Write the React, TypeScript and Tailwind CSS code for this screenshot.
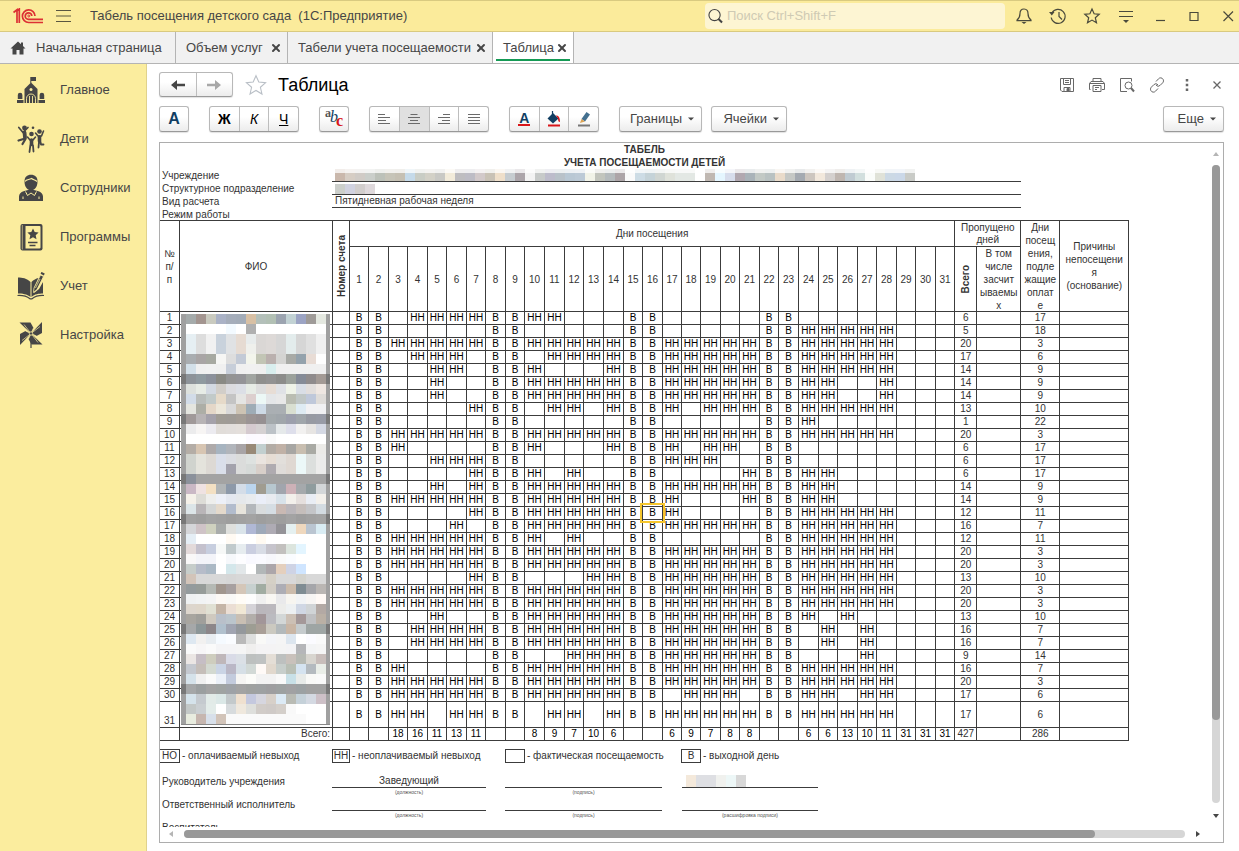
import React from 'react';
import { X } from 'lucide-react';

type IconProps = { children: React.ReactNode; box?: string; className?: string };

const Icon = ({ children, box = '0 0 28 28', className = 'size-7' }: IconProps) => (
  <svg viewBox={box} className={className} fill="none" aria-hidden="true">
    {children}
  </svg>
);

/* ---------- sidebar icons ---------- */

const SchoolIcon = () => (
  <Icon className="size-7 text-[#464646]">
    <g fill="currentColor">
      <path d="M13.300 1h5.700v4h-4.700v2h-1z" />
      <path d="M14 6.500 7.500 13v14h13V13z" />
      <path d="M0 24h6.500v3H0zM21.500 24H28v3h-6.500z" />
      <path d="M.8 23v-4a2.300 2.300 0 0 1 4.600 0v4zM22.600 23v-4a2.300 2.300 0 0 1 4.600 0v4z" />
    </g>
    <circle cx="14" cy="13.500" r="1.500" fill="#fbed9e" />
    <path d="M9.500 27v-4.500a4.500 4.500 0 0 1 9 0V27M12.500 27v-7M15.500 27v-7" stroke="#fbed9e" strokeWidth=".9" />
  </Icon>
);

const ChildrenIcon = () => (
  <Icon className="size-7 text-[#464646]">
    <g fill="currentColor">
      <circle cx="7.500" cy="3" r="2.400" />
      <circle cx="14.500" cy="9" r="2.300" />
      <circle cx="22.500" cy="6.500" r="2.300" />
      <circle cx="16" cy="2.800" r="1.300" />
    </g>
    <g stroke="currentColor" strokeLinecap="round" strokeLinejoin="round">
      <path d="M1.800 2.500 6 7.500 11 2.500" strokeWidth="1.700" />
      <path d="M7.500 7.500 8 12.500" strokeWidth="3.800" />
      <path d="m6.500 14-5 1.500M8.500 14l-3 5" strokeWidth="2.200" />
      <path d="m10.500 12 2.500 3h3l2.500-3" strokeWidth="1.600" />
      <path d="M14.500 15v4.500" strokeWidth="3.600" />
      <path d="M13.300 20.500 12.500 27M16 20.500l.5 6" strokeWidth="1.800" />
      <path d="m18.500 8 2.500 3h3.500l2-5" strokeWidth="1.600" />
      <path d="M22.500 12v4" strokeWidth="3.600" />
      <path d="m22 17-.5 5.500M23.500 17l.5 2.500h2.500" strokeWidth="1.800" />
    </g>
  </Icon>
);

const StaffIcon = () => (
  <Icon className="size-7 text-[#464646]">
    <path d="M2 27v-4.500c0-2.500 2-4.500 4.500-5.200L11 16h6l4.500 1.300c2.500.7 4.500 2.700 4.500 5.200V27z" fill="currentColor" />
    <path d="m8.500 17.500 2 4 3.500-2.500 3.500 2.500 2-4" stroke="#fbed9e" strokeWidth="1" />
    <path d="M7.500 7.500C7.500 3 10 .8 14 .8s6.500 2.200 6.500 6.700c0 5.500-3 9-6.500 9s-6.500-3.500-6.500-9z" fill="currentColor" />
    <path d="M8 7.500C9.500 5 12 6 14.500 4.500c2 1.500 3.500 1 5.500 3" stroke="#fbed9e" strokeWidth="1.200" />
    <path d="M6 22.500V25M22 22.500V25" stroke="#fbed9e" strokeWidth="1" />
  </Icon>
);

const ProgramsIcon = () => (
  <Icon className="size-7 text-[#464646]">
    <rect x="3.500" y="1" width="22" height="26.500" rx="2" fill="currentColor" />
    <path d="M8.500 3h14a1 1 0 0 1 1 1v20.500a1 1 0 0 1-1 1h-14z" fill="#fbed9e" />
    <path d="M5.300 2v24.500" stroke="#fbed9e" strokeWidth=".6" />
    <path d="m16 5.500 1.700 3.600 3.900.5-2.900 2.700.8 3.900-3.500-1.900-3.500 1.900.8-3.900-2.900-2.700 3.900-.5z" fill="currentColor" />
    <path d="M11 19.500h9.500M12.500 22.500h6" stroke="currentColor" strokeWidth="1.400" />
  </Icon>
);

const AccountingIcon = () => (
  <Icon className="size-7 text-[#464646]">
    <path d="M1 5.500c4 0 9 .8 12.500 4.500V25C10 22 5 21.500 1 21.500zM14.500 10c2-2 4.500-3.500 7-4l-4 9-.5 6 5-4 4-7v11.500c-4 0-8.500.5-11.500 3.500z" fill="currentColor" />
    <path d="M.5 23.500c5-.3 9 .5 12.500 3.300h2c3.500-2.800 7-3.600 12-3.300" stroke="currentColor" strokeWidth="1.200" />
    <path d="m23.500 3 3 1.500-6.500 13-3.500 3 .5-4.500z" fill="currentColor" stroke="#fbed9e" strokeWidth=".8" />
    <path d="m24 .8 3.300 1.700" stroke="currentColor" strokeWidth="2" />
    <path d="m23 7-4.500 9" stroke="#fbed9e" strokeWidth=".7" />
  </Icon>
);

const PinwheelIcon = () => (
  <Icon className="size-7 text-[#464646]">
    <path d="M14 14v13" stroke="currentColor" strokeWidth="1.200" />
    {[0, 90, 180, 270].map((angle) => (
      <g key={angle} transform={`rotate(${angle} 14 12.500)`}>
        <path d="M14 12.500 2.500 1.500h11l3 5.500z" fill="currentColor" />
        <path d="M14 12.500 7 3.500M14 12.500l2.500-5.500" stroke="#fbed9e" strokeWidth=".7" />
      </g>
    ))}
    <circle cx="14" cy="12.500" r="1.700" fill="currentColor" stroke="#fbed9e" strokeWidth=".8" />
  </Icon>
);

const sections = [
  { label: 'Главное', icon: <SchoolIcon /> },
  { label: 'Дети', icon: <ChildrenIcon /> },
  { label: 'Сотрудники', icon: <StaffIcon /> },
  { label: 'Программы', icon: <ProgramsIcon /> },
  { label: 'Учет', icon: <AccountingIcon /> },
  { label: 'Настройка', icon: <PinwheelIcon /> },
];

/* ---------- title bar ---------- */

const Logo = () => (
  <svg viewBox="0 0 30 16" className="h-4 w-[30px]" fill="none" stroke="#dc3034" role="img" aria-label="1С">
    <path d="M.5 4.500 4 1.800V15M3 3.500 6.300 1v14" strokeWidth="1.700" />
    <path d="M22 8a6.300 6.300 0 1 0-6.300 6.500H30" strokeWidth="1.700" />
    <path d="M18.800 8a3.300 3.300 0 1 0-3.200 3.400H30" strokeWidth="1.700" />
    <circle cx="15.800" cy="8" r="1" strokeWidth="1" />
  </svg>
);

const STAR = 'm9 2 2.100 4.800 5.100.5-3.900 3.400 1.200 5.100L9 13.100l-4.500 2.700 1.200-5.100L1.800 7.300l5.100-.5z';

const windowButtons = [
  {
    label: 'Уведомления',
    icon: (
      <>
        <path d="M9 2c-3 0-4 2-4 4.500 0 4-1 5-3 6.500v.7h14V13c-2-1.500-3-2.500-3-6.500C13 4 12 2 9 2z" />
        <path d="M6.500 15h5L9 17z" fill="#4a4a3c" stroke="none" />
      </>
    ),
  },
  {
    label: 'История',
    icon: (
      <>
        <path d="M3 6a7 7 0 1 1-.8 4.500M10 5v4.500l3 3" />
        <path d="M0 5h5.500L2.800 8.500z" fill="#4a4a3c" stroke="none" />
      </>
    ),
  },
  { label: 'Избранное', icon: <path d={STAR} /> },
  {
    label: 'Настройки панели',
    icon: (
      <>
        <path d="M2 4.500h14M2 9.500h14" />
        <path d="M6 13h6l-3 3z" fill="#4a4a3c" stroke="none" />
      </>
    ),
  },
  { label: 'Свернуть', icon: <path d="M5 13.500h9" /> },
  { label: 'Развернуть', icon: <path d="M5 5.500h8v8H5z" /> },
  { label: 'Закрыть', icon: <path d="m4.500 4.500 9.500 9.500m0-9.500-9.500 9.500" /> },
];

const TitleBar = () => (
  <header className="flex h-8 shrink-0 items-center overflow-hidden border-t border-b border-[#d9ca80] bg-[#fbeb9b] pl-[13px] text-[#464646]">
    <Logo />
    <button aria-label="Главное меню" className="ml-[13px] flex">
      <Icon box="0 0 15 14" className="h-3.5 w-[15px]">
        <path d="M0 1.500h15M0 7h15M0 12.500h15" stroke="#5a5640" strokeWidth="1" />
      </Icon>
    </button>
    <h1 className="ml-[19px] text-[13px] whitespace-pre">Табель посещения детского сада  (1С:Предприятие)</h1>
    <label className="mr-0.5 ml-auto flex h-[26px] w-[300px] items-center rounded-sm bg-[#fdf5d3] pl-[3px]">
      <Icon box="0 0 16 16" className="size-4">
        <circle cx="7" cy="7" r="6" stroke="#444" strokeWidth="1.200" />
        <path d="m11 11 4 4" stroke="#444" strokeWidth="2.200" />
      </Icon>
      <input
        type="text"
        aria-label="Поиск"
        placeholder="Поиск Ctrl+Shift+F"
        className="ml-1 w-full bg-transparent text-[13px] outline-none placeholder:text-[#cfcab4]"
      />
    </label>
    <div className="-mr-1.5 flex">
      {windowButtons.map((b) => (
        <button key={b.label} aria-label={b.label} className="flex w-[34px] justify-center">
          <Icon box="0 0 18 18" className="size-[18px] stroke-[#4a4a3c] stroke-[1.200]">
            {b.icon}
          </Icon>
        </button>
      ))}
    </div>
  </header>
);

/* ---------- tabs ---------- */

const tabs = [
  { title: 'Объем услуг', width: 'w-28', active: false },
  { title: 'Табели учета посещаемости', width: 'w-[205px]', active: false },
  { title: 'Таблица', width: 'w-[81px]', active: true },
];

const TabBar = () => (
  <nav className="flex h-8 shrink-0 border-b border-[#b4b4b4] bg-[#f1f1f1] text-[13px] text-[#464646]">
    <a href="#home" className="flex w-44 items-center border-r border-[#b4b4b4] pl-2.5">
      <Icon box="0 0 16 14" className="h-3.5 w-4">
        <path d="M8 .5.500 7.500H2.500V13.500H6.500V9h3v4.500h4v-6h2L13 5V1.500h-2v1.700z" fill="#464646" />
      </Icon>
      <span className="ml-2.5">Начальная страница</span>
    </a>
    {tabs.map((t) => (
      <div
        key={t.title}
        className={`relative flex items-center justify-between border-r border-[#b4b4b4] pr-[5px] pl-2.5 whitespace-nowrap ${t.width} ${t.active ? 'bg-white' : ''}`}
      >
        <a href="#tab">{t.title}</a>
        <button aria-label={`Закрыть ${t.title}`}>
          <X className="size-3" strokeWidth={4} />
        </button>
        {t.active && <span className="absolute inset-x-[3px] bottom-0.5 h-0.5 bg-[#159a55]" />}
      </div>
    ))}
  </nav>
);

const Sidebar = () => (
  <aside className="w-[147px] shrink-0 border-r border-[#e0d28c] bg-[#fbed9e] pt-px text-[13px] text-[#464646]">
    {sections.map((s) => (
      <a key={s.label} href="#section" className="flex h-[49px] items-center pl-[17px]">
        {s.icon}
        <span className="ml-[15px]">{s.label}</span>
      </a>
    ))}
  </aside>
);

/* ---------- form header and toolbar ---------- */

const GROUP =
  'flex overflow-hidden rounded-[3px] border border-[#b8b8b8] border-b-[#999] bg-linear-to-b from-white from-40% to-[#ececec] shadow-[0_1px_1px_rgba(0,0,0,0.12)] divide-x divide-[#bdbdbd]';

type Tool = { label: string; icon: React.ReactNode; pressed?: boolean };

const ToolGroup = ({ tools, width }: { tools: Tool[]; width: string }) => (
  <div className={`${GROUP} h-[26px] ${width}`}>
    {tools.map((t) => (
      <button
        key={t.label}
        aria-label={t.label}
        className={`flex flex-1 items-center justify-center ${t.pressed ? 'bg-[#e0e0e0]' : ''}`}
      >
        {t.icon}
      </button>
    ))}
  </div>
);

const Lines = ({ d }: { d: string }) => (
  <Icon box="0 0 14 14" className="size-3.5">
    <path d={d} stroke="#6a6a6a" strokeWidth="1" />
  </Icon>
);

const alignTools: Tool[] = [
  { label: 'По левому краю', icon: <Lines d="M1 2.500h7M1 5.500h12M1 8.500h8M1 11.500h12" /> },
  { label: 'По центру', icon: <Lines d="M3.500 2.500h7M1 5.500h12M3 8.500h8M1 11.500h12" />, pressed: true },
  { label: 'По правому краю', icon: <Lines d="M6 2.500h7M1 5.500h12M5 8.500h8M1 11.500h12" /> },
  { label: 'По ширине', icon: <Lines d="M1 2.500h12M1 5.500h12M1 8.500h12M1 11.500h12" /> },
];

const fontTools: Tool[] = [
  { label: 'Жирный', icon: <b className="text-sm text-black">Ж</b> },
  { label: 'Курсив', icon: <i className="text-sm text-black">К</i> },
  { label: 'Подчеркнутый', icon: <u className="text-sm text-black">Ч</u> },
];

const colorTools: Tool[] = [
  {
    label: 'Цвет текста',
    icon: (
      <span className="flex flex-col items-center">
        <b className="text-sm leading-3 text-[#123f63]">A</b>
        <span className="h-0.5 w-3 bg-[#d8161b]" />
      </span>
    ),
  },
  {
    label: 'Цвет фона',
    icon: (
      <Icon box="0 0 14 16" className="h-4 w-3.5">
        <path d="m6 2 5.500 5.500L6 12.500.500 7.500z" fill="#123f63" />
        <path d="M5.500 0v5" stroke="#123f63" strokeWidth="1.200" />
        <path d="M9 4.500c3 0 4 2.500 4 6.500-1.500 0-2-1-2-3.500z" fill="#d8161b" />
        <path d="M1 14.500h12" stroke="#d8161b" strokeWidth="2" />
      </Icon>
    ),
  },
  {
    label: 'Цвет рамки',
    icon: (
      <Icon box="0 0 14 16" className="h-4 w-3.5">
        <path d="m9.500 1 3.500 2.500-5 7L4.500 8z" fill="#44708f" />
        <path d="M4.500 8 8 10.500 3 12z" fill="#dca454" />
        <path d="M1 14.500h12" stroke="#777" strokeWidth="2" />
      </Icon>
    ),
  },
];

const MenuButton = ({ label, width }: { label: string; width: string }) => (
  <button className={`${GROUP} h-[26px] ${width} items-center justify-end gap-1.5 pr-[7px] text-[13px] text-[#464646]`}>
    <span className="border-0">{label}</span>
    <Icon box="0 0 6 4" className="h-1 w-1.5 border-0">
      <path d="M0 .5h6L3 3.500z" fill="#464646" />
    </Icon>
  </button>
);

const formActions = [
  {
    label: 'Сохранить',
    icon: (
      <>
        <path d="M1.500 1.500h13v13H3l-1.500-1.500zM4.500 1.500v6h7v-6M6 3.500h4M6 5.500h4M5 14.500v-4h6v4" />
        <path d="M8 11.500h2v2.500H8z" fill="#5c5c5c" />
      </>
    ),
  },
  {
    label: 'Печать',
    icon: (
      <path d="M4 4.500v-3h8v3M1.500 12.500H.500v-6l1.500-2h12l1.500 2v6H13M4 8.500h8v6H4zM6 10.500h4M6 12.500h2M.500 6.500h15M12 6.500h2" />
    ),
  },
  {
    label: 'Просмотр',
    icon: (
      <>
        <path d="M8 14.500H1.500v-13h11v3M3.500 14.500" />
        <circle cx="9.500" cy="8.500" r="3.500" />
        <path d="m12 11 3 3.500" strokeWidth="2" />
      </>
    ),
  },
  {
    label: 'Ссылка',
    icon: (
      <path d="m7 4.500 2.500-2.700a2.800 2.800 0 0 1 4.500.4c.8 1.200.6 2.600-.3 3.600l-2.500 2.500a2.800 2.800 0 0 1-4.200-.2M9 11.500l-2.500 2.700a2.800 2.800 0 0 1-4.500-.4c-.8-1.200-.6-2.600.3-3.600l2.500-2.500a2.800 2.800 0 0 1 4.200.2" />
    ),
  },
  { label: 'Еще действия', icon: <path d="M8 2v2.500M8 6.800v2.500M8 11.500V14" strokeWidth="2.500" /> },
  { label: 'Закрыть форму', icon: <path d="m4.500 4.500 7 7m0-7-7 7" strokeWidth="1.300" /> },
];

const Arrow = ({ d, color }: { d: string; color: string }) => (
  <Icon box="0 0 16 12" className="h-3 w-4">
    <path d={d} fill={color} />
  </Icon>
);

const FormHeader = () => (
  <>
    <div className="mt-2 flex h-[25px] items-center">
      <div className={`${GROUP} h-[25px] w-[74px]`}>
        <button aria-label="Назад" className="flex flex-1 items-center justify-center">
          <Arrow d="M1 6 7 1v3.700h8v2.600H7V11z" color="#464646" />
        </button>
        <button aria-label="Вперед" className="flex flex-1 items-center justify-center">
          <Arrow d="M15 6 9 1v3.700H1v2.600h8V11z" color="#a8a8a8" />
        </button>
      </div>
      <button aria-label="В избранное" className="ml-[11px] flex">
        <Icon box="0 0 18 18" className="size-6">
          <path d={STAR} stroke="#b9bfc6" strokeWidth=".8" />
        </Icon>
      </button>
      <h2 className="ml-[10px] text-lg text-black">Таблица</h2>
      <div className="-mr-2 ml-auto flex">
        {formActions.map((a) => (
          <button key={a.label} aria-label={a.label} className="flex w-[30px] justify-center">
            <Icon box="0 0 16 16" className="size-4 stroke-[#686868]">
              {a.icon}
            </Icon>
          </button>
        ))}
      </div>
    </div>
    <div className="mt-[9px] flex">
      <div className="flex gap-5">
        <ToolGroup width="w-[30px]" tools={[{ label: 'Шрифт', icon: <b className="text-base text-[#123f63]">A</b> }]} />
        <ToolGroup width="w-[90px]" tools={fontTools} />
        <ToolGroup
          width="w-[30px]"
          tools={[
            {
              label: 'Снять оформление',
              icon: (
                <span className="flex font-['Liberation_Serif',serif] text-base leading-3">
                  <b className="-mt-1 text-xs leading-3 text-[#555]">a</b>
                  <i className="-ml-px text-[#123f63]">b</i>
                  <b className="mt-1 -ml-0.5 text-[#d8161b]">c</b>
                </span>
              ),
            },
          ]}
        />
        <ToolGroup width="w-[120px]" tools={alignTools} />
        <ToolGroup width="w-[90px]" tools={colorTools} />
        <MenuButton label="Границы" width="w-[83px]" />
      </div>
      <div className="ml-[9px] flex">
        <MenuButton label="Ячейки" width="w-[76px]" />
      </div>
      <div className="ml-auto flex">
        <MenuButton label="Еще" width="w-[61px]" />
      </div>
    </div>
  </>
);

/* ---------- sheet data ---------- */

const DAY_WIDTHS = [
  19, 20, 19, 20, 19, 20, 19, 20, 19, 20, 20, 19, 20, 20, 19, 20, 19, 19, 20, 19, 20, 19, 20, 20, 19, 20, 19, 20, 19, 20, 19,
];
const COLUMNS = [20, 153, 17, ...DAY_WIDTHS, 22, 44, 39, 69];
const DAYS = DAY_WIDTHS.map((_, i) => i + 1);
const WEEKEND = [1, 2, 8, 9, 15, 16, 22, 23];
const ALL = '3-7,10-14,17-21,24-28';

const ABSENCES = [
  '4-7,10-11',
  '24-28',
  ALL,
  '4-6,11-14,17-21,24-28',
  '5-6,10,14,17-21,24-28',
  '5,10-14,17-21,24-25,28',
  '5,10-14,17-21,24-25,28',
  '7,11-12,14,17,19-21,24-28',
  '24',
  ALL,
  '3,10,14,17,19-20',
  '5-7,17-19',
  '7,10,12,21,24-25',
  '5,7,10-14,17-21,24-25',
  '3-7,10-14,17,21,24-25',
  '7,10-14,17,24-28',
  '6,10-14,17-21,24-28',
  '3-7,10,12,24-28',
  ALL,
  ALL,
  '7,13-14,17-21,24-28',
  ALL,
  ALL,
  '5,10-14,17-21,24,26',
  '4-7,10-14,17-21,25,27',
  '4-7,10-14,17-21,25,27',
  '12-14,17-21,27',
  '3,10-14,17-21,24-28',
  ALL,
  '3-7,10-14,18-20,24-25,27-28',
  '3-4,6-7,11-12,14,17-21,24-28',
];

const expand = (ranges: string) =>
  ranges.split(',').flatMap((r) => {
    const [from, to = from] = r.split('-').map(Number);
    return Array.from({ length: to - from + 1 }, (_, i) => from + i);
  });

const TOTALS = [
  '', '', 18, 16, 11, 13, 11, '', '', 8, 9, 7, 10, 6, '', '', 6, 9, 7, 8, 8, '', '', 6, 6, 13, 10, 11, 31, 31, 31,
];

const NAME_BLOCKS = [
  'a5abab a39590 c9cabf aab2c6 a5adba a3acb8 d8c0a4 b4c0ba b2c0b4 9ca4b0 c2d2d4 9ca4c4 9f9b98 e4e8e0',
  'fff fff fff fff f3faff fff b0b0b0 fff fff fff fff fff fff fff',
  'e6eff3 dddddd f1f1f1 c9d2dc e0e2e4 e6dbd2 e8ecec dad7d5 ddd9d7 d6d6d6 e3ecec d6d6d6 e0e0e0 f0f0f0',
  'e6eff3 dddddd f1f1f1 c9d2dc e0e2e4 e6dbd2 eff0ec dad7d5 ddd9d7 d6d6d6 e3ecec d6d6d6 e0e0e0 f0f0f0',
  'a9adb0 a9a5a5 a7a9a1 f6f6f4 dddddd c3cad6 f3f5ec c2c5b5 bab0ae d4d4d2 a8aaa6 94a2ac e8dcd5 fefefe',
  'd3e0e9 f0f0f0 f1f1f1 f0f0f0 c7ced9 f0f0f0 f1f1f1 f0f0f0 d9eeee f0f0f0 f0f0f0 f0f0f0 f0f0f0 f0f0f0',
  '8d9399 8f9aa0 8c919b 8a8a84 949494 949498 a1a5a1 8f8f8d 929292 8c8c8a 9ba19b 858b97 8f8b8c a39a95',
  'dde1dd e7ece6 d3d9e2 d2cec9 dcdce0 dcdfe6 e7ece6 dedede e7ddd5 e0e2e6 eff3e8 d9dee6 e2dedc efe7e2',
  'd2dce8 b9bdbb c2cac9 e6dac9 c4c4c4 e5e5e3 dccfce ecf8f6 e4e6e8 e8e8e8 babdb2 c0c7c6 bfc8da dfdcd9',
  'e4e5df adaea6 e4d7c8 ece7da d9d9d9 cdc3b3 9eacb6 cddae6 aaafb3 aaafb3 d9dfd1 deebf3 f1f1f3 f1f1f3',
  'a09999 b7b3b5 a4a1aa a09c95 9f9b96 a39c95 9b9494 969092 a3a9ac a0a6ab 9c9fac a0a6ab 979aa3 989ba6',
  'ececed f7f5f4 ecebf0 e1ddd9 e2dedb e4dfdb d5cacf d5d1d2 bcc2c7 e5e9ea dedfeb f2f1f0 e7e5e3 d5d9e4',
  'fff fff fff fff fff fff fcfaff fdfaff fafafa fff fff fff fff fff',
  'b4ada6 d7c5b2 aeaaaa a7b4c0 b1b5bb a8a4a6 988977 c2cfcf b3aca5 c0b1a6 a7a6a3 c8beb0 a9aaa4 ecebe8',
  'd0d3ce e4e3dc ddd9d4 dadfea dbdde2 dbdcdb dee2e0 eae4df e6ddd4 e2dfdb dfd8d2 ecf8f8 dcdfdd ececeb',
  'd0d3ce e4e3dc ddd9d4 dadfea a3a2ac dbdcdb d6dad8 d8cfc9 afabb0 dfdcd9 dfd8d2 ecf8f8 dcdfdd ececeb',
  '8b919b a3a3a3 a3a3a3 a3a3a3 a3a3a3 a3a3a3 a3a3a3 a3a3a3 a3a3a3 a3a3a3 a3a3a3 a3a3a3 a3a3a3 a3a3a3',
  'cab8c5 efe2e2 f3e0c3 b1b5b7 8d99a9 d4dde8 bbd5ee a09c90 b7c7cf a1a5ad cdb1b7 a5a9ac 8f9c9e d3d6d8',
  'f5f1e9 dddcd7 eeeeec edf0f8 e4e8f0 e5e8eb e8ebee eaeef8 e8ebf0 d8e2e9 f3f0eb e5dfdd e9edf4 f3f0eb',
  'dce5e8 b9b5b8 d3d5d5 e4d9cb b2bccd e7e4dc b3b7bb d9dcdd d5dde3 c9b9b3 bab6ba c5bebb c4c5c8 d3dbe1',
  'a1a1a1 9e9e9e a3a3a3 a1a1a1 9e9e9e a1a1a1 a3a3a3 9e9e9e a1a1a1 9e9e9e a3a3a3 9e9e9e a1a1a1 a3a3a3',
  'd5d6d9 cfc3c7 cfd1bf a9acab dfe0dd dae4ea b0b8d5 9ea9b9 aeabb4 949398 e5f0f0 efd8be bac5d1 d9ecf3',
  'e5eef5 fff fff fff fffaf3 fff fff fffaf2 fff fff fff fff fff fff',
  'e3dada c4c1cd c7cedf f6f8f7 c1cacc e6ecef cacee0 d8dce5 c6c4cc c2c0be dce5de e3f5ff fff fff',
  'f9f8f8 f3f4f9 f3f4f9 fff f6f8fb fdfdff f9f9ff fafaff f7f7fb fafafa fafcff fff fff fff',
  'c6cdca b6bcc9 abb9c5 fff d4e7eb e2e7e9 fff b2b7b8 aca6aa e4cfbd ced3e5 cfe5ff fff fff',
  'd2c4b9 d8d8d8 d8d8d8 d8d8d8 d6d6d6 d8d8d8 d8d8d8 d8d8d8 d5d0c6 d8d8d8 d8d8d8 d3d3ce d8d8d8 d8d8d8',
  '949b9d 969c99 b5b9b4 a1968e a7a0a0 d4c6b8 c7d0cf a1aca2 d2cdc5 adadb5 cbbbab 7f8c93 a5a6aa bab6b3',
  'eff1f2 f1f3f4 f4f4f4 fcf8f4 f9f8f6 fffcf7 fdfdfd f0f0f0 f9f7f3 e9e9eb f7f5f0 f1f3f5 f7f5f3 fff9f5',
  'ddd6cd ded6ca e0e0d3 c5b5a7 ebded4 f1e8d5 d5d3d8 bab7bc bbb8bd ececea edf0f2 d0d7e4 d0d4d6 b3a9a4',
  'a8a59f a09f9b cfc9bf b9c0ca bbc5cc c9bfb3 b2aeaa a29699 bbbbc0 d3d7d7 ccc0b5 a49899 bfc0c2 bab0a5',
  'a6a8a9 8c9698 8c8689 b0c0cd a0a4b1 94989c 9d9d93 a99f97 cbc9c0 b3b9bb c9b6a5 c5cbcd 9ea5a4 9ea5a4',
  'dee8f1 f2f1f0 e8edf1 f5faff fafcff b9b9b9 dedfde f9f9f7 f4f5f8 f5f5f5 dde6ef fff fbfbff fafafa',
  'fafafa f7f6f7 fafafa f4f4f6 f4f4f6 f5f5f5 f0efee f4f3f4 f4f3f4 f4f4f4 f3f3f5 b5b6b9 f3f4f5 f5f5f5',
  'ebe6e4 c6bec5 cecdbe bfb7ba d9dbe7 dbe0e6 bdc0bf bfc2c2 e4ded6 bdc0bf c9c1bb b7bab4 d8d5cf c8bdba',
  'c4c8cf c5beb9 d3d9d1 cad4e5 bab7c6 d6dfe6 d2d9d6 fffaf7 e1d8cd c7cecb b9bfb5 d5e3f0 b4babf eaeee8',
  'd5e2ea f0f0f0 fafafa ebf0f8 c3cbdd f6f5f3 fcfcf9 f3f3f3 f3f3f3 f9f9f9 c8e0e7 e8ebe9 f9f9f7 fafafa',
  'a5a7a8 9b9fa0 a3a3a3 9fa3a2 9ea2a7 a3a3a3 9fa1a0 9ea1a2 9e9ea0 9da1a1 a1a1a3 9ca1a3 a1a1a1 a1a1a1',
  'd5e3eb c5cacf e2ebe8 dbe8e7 c3c9cb efe0cf c4c8de d6d6df d7d0c9 dceaf5 b9bbb4 c5d1d9 d4d9e2 cdc0c7',
  'c3c8c7 cacfd2 e3ece9 fff d7dbdd efe8dd dedfdc d1ccc8 cfcac7 d4cfca f9f9f9 fff fff fff',
  'e8ecdf c6b6af d8e0ea d2c4b9 fafafa fafafa fafafa fafafa fafafa fafafa fafafa fafafa fff fff',
].map((row) => row.split(' '));

const DARK_ROWS = [6, 10, 16, 20, 31, 37];

const NameMosaic = () => (
  <svg viewBox="0 0 149 411" className="absolute top-0.5 left-px z-10 h-[411px] w-[149px] max-w-none" shapeRendering="crispEdges" aria-hidden="true">
    <rect width="149" height="411" fill="#a0a0a0" />
    {NAME_BLOCKS.map((row, y) => (
      <g key={y}>
        {DARK_ROWS.includes(y) && <path d={`M0 ${y * 10}h149v10H0z`} fill="#787878" />}
        {row.map((color, x) => (
          <rect key={x} x={5 + x * 10} y={y * 10} width="10" height="10" fill={`#${color}`} />
        ))}
      </g>
    ))}
    <path d="M0 410.500h149" stroke="#888" />
  </svg>
);

const ORG_BLOCKS =
  'cab8ac d6cdc4 d0cbc6 caceca bcc1b9 c6c4b8 c5c0b3 c5dae9 c9cdc5 d3d1c7 c9c9c5 f2ebda bebdc0 bdbcc5 d2c9ca c9c2b6 efdfca c6ccd0 aca5aa f3f3f3 c7cac9 bdbccb b9c2c9 b9c8d4 bccad6 f1f3e8 c2c5bd b5bbbd ada5a8 fafafa cddce5 c5d3d8 d0d6d2 dfe2da e3e8e4 e3e8e4 ffffff c0b8b2 e5f6ff d7ddec b1a8b0 a9b3b9 c2c9c5 b9c2c2 e9dbca c5c8c5 a4aab1 cdc6bf f2e8dc d4d0ce bfb6b0 c0cbd2 d2dfde fafcfa e0e2d8 ccd9e5 cbd8e8 c9cbc7'.split(' ');
const UNIT_BLOCKS = 'cccfcb d1d2e0 d2cecd dfd9dc'.split(' ');
const SIGN_BLOCKS = 'f4e9db dedfe3 dedfe3 f0f1ee edf7f7 d8d8d8'.split(' ');

const Strip = ({ colors, height, faded = 0 }: { colors: string[]; height: number; faded?: number }) => (
  <svg width={colors.length * 10} height={height} shapeRendering="crispEdges" aria-hidden="true">
    {colors.map((c, i) => (
      <g key={i} fill={`#${c}`}>
        <rect x={i * 10} width="10" height={faded} opacity=".25" />
        <rect x={i * 10} y={faded} width="10" height={height - faded} />
      </g>
    ))}
  </svg>
);

/* ---------- sheet ---------- */

const LINE = 'border-[#3c3c3c]';
const CELL = `border-r border-b ${LINE} p-0 text-center font-normal`;

const SheetTable = () => (
  <table className={`w-[969px] table-fixed border-separate border-spacing-0 border-t ${LINE} leading-3`}>
    <colgroup>
      {COLUMNS.map((w, i) => (
        <col key={i} style={{ width: w }} />
      ))}
    </colgroup>
    <thead className="leading-[13px]">
      <tr className="h-[26px]">
        <th rowSpan={2} className={CELL}>№<br />п/<br />п</th>
        <th rowSpan={2} className={CELL}>ФИО</th>
        <th rowSpan={2} className={CELL}>
          <b className="inline-block rotate-180 align-middle whitespace-nowrap [writing-mode:vertical-rl]">Номер счета</b>
        </th>
        <th colSpan={31} className={CELL}>Дни посещения</th>
        <th colSpan={2} className={`${CELL} leading-3`}>Пропущено<br />дней</th>
        <th rowSpan={2} className={CELL}>
          <div className="h-[90px]">Дни<br />посещ<br />ения,<br />подле<br />жащие<br />оплат<br />е</div>
        </th>
        <th rowSpan={2} className={CELL}>Причины<br />непосещени<br />я<br />(основание)</th>
      </tr>
      <tr className="h-[65px]">
        {DAYS.map((d) => (
          <th key={d} className={CELL}>{d}</th>
        ))}
        <th className={CELL}>
          <b className="inline-block rotate-180 align-middle [writing-mode:vertical-rl]">Всего</b>
        </th>
        <th className={CELL}>
          <div className="h-16">В том<br />числе<br />засчит<br />ываемы<br />х</div>
        </th>
      </tr>
    </thead>
    <tbody>
      {ABSENCES.map((ranges, r) => {
        const missed = expand(ranges);
        const last = r === ABSENCES.length - 1;
        return (
          <tr key={r} className={last ? 'h-[26px]' : 'h-[13px]'}>
            <td className={`${CELL} ${last ? 'align-bottom' : ''}`}>{r + 1}</td>
            <td className={`${CELL} ${r === 0 ? 'relative' : ''}`}>{r === 0 && <NameMosaic />}</td>
            <td className={CELL} />
            {DAYS.map((d) => (
              <td key={d} className={`${CELL} relative text-black`}>
                {WEEKEND.includes(d) ? 'В' : missed.includes(d) ? 'НН' : ''}
                {r === 15 && d === 16 && <span className="absolute -inset-x-[3px] -inset-y-1 z-10 border-2 border-[#f5c62c]" />}
              </td>
            ))}
            <td className={CELL}>{missed.length}</td>
            <td className={CELL} />
            <td className={CELL}>{23 - missed.length}</td>
            <td className={CELL} />
          </tr>
        );
      })}
      <tr className="h-[13px]">
        <td className={CELL} />
        <td className={`border-r border-b ${LINE} p-0 pr-0.5 text-right`}>Всего:</td>
        <td className={CELL} />
        {TOTALS.map((t, i) => (
          <td key={i} className={`${CELL} text-black`}>{t}</td>
        ))}
        <td className={CELL}>427</td>
        <td className={CELL} />
        <td className={CELL}>286</td>
        <td className={CELL} />
      </tr>
    </tbody>
  </table>
);

const details = [
  { label: 'Учреждение', value: <Strip colors={ORG_BLOCKS} height={12} faded={4} /> },
  { label: 'Структурное подразделение', value: <Strip colors={UNIT_BLOCKS} height={10} /> },
  { label: 'Вид расчета', value: 'Пятидневная рабочая неделя' },
];

const legend = [
  { mark: 'НО', text: '- оплачиваемый невыход', width: 'w-[172px]', box: 'w-5 border-l-0' },
  { mark: 'НН', text: '- неоплачиваемый невыход', width: 'w-[173px]', box: 'w-[18px]' },
  { mark: '', text: '- фактическая посещаемость', width: 'w-[176px]', box: 'w-5' },
  { mark: 'В', text: '- выходной день', width: 'w-[140px]', box: 'w-5' },
];

type SignatureProps = { label: string; position?: string; name?: React.ReactNode; nameCaption?: string };

const Signature = ({ label, position, name, nameCaption }: SignatureProps) => (
  <div className="grid h-[23px] grid-cols-[172px_154px_157px_137px] [&>div]:grid [&>div]:grid-rows-[13px_10px] [&>div]:text-center">
    <span className="pl-0.5 leading-[13px]">{label}</span>
    <div>
      <span className={`border-b ${LINE} leading-3`}>{position}</span>
      <small className="text-[5px] leading-[8px] text-[#555]">(должность)</small>
    </div>
    <div className="ml-[19px] w-[157px]">
      <span className={`border-b ${LINE}`} />
      <small className="text-[5px] leading-[8px] text-[#555]">(подпись)</small>
    </div>
    <div className="ml-[39px] w-[136px]">
      <span className={`flex items-end border-b ${LINE} pl-1`}>{name}</span>
      <small className="text-[5px] leading-[8px] text-[#555]">{nameCaption}</small>
    </div>
  </div>
);

const Sheet = () => (
  <div className="min-h-0 flex-1 overflow-hidden text-[10px] whitespace-nowrap text-[#333]">
    <div className="w-[969px]">
      <div className="text-center leading-[13px] font-bold">
        <p>ТАБЕЛЬ</p>
        <p>УЧЕТА ПОСЕЩАЕМОСТИ ДЕТЕЙ</p>
      </div>
      {details.map((d) => (
        <div key={d.label} className="flex h-[13px] leading-[14px]">
          <span className="w-[172px] pl-0.5">{d.label}</span>
          <span className={`flex w-[689px] items-end border-b ${LINE} pl-[3px] leading-3`}>{d.value}</span>
        </div>
      ))}
      <div className="h-3 pl-0.5 leading-[14px]">Режим работы</div>
    </div>
    <SheetTable />
    <div className="mt-[7px] flex">
      {legend.map((l) => (
        <div key={l.text} className={`flex items-center ${l.width}`}>
          <span className={`h-3.5 border text-center leading-3 ${LINE} ${l.box}`}>{l.mark}</span>
          <span className="ml-0.5">{l.text}</span>
        </div>
      ))}
    </div>
    <div className="mt-3">
      <Signature label="Руководитель учреждения" position="Заведующий" name={<Strip colors={SIGN_BLOCKS} height={12} />} />
      <Signature label="Ответственный исполнитель" nameCaption="(расшифровка подписи)" />
      <div className="pl-0.5 leading-[13px]">Воспитатель</div>
    </div>
  </div>
);

const Triangle = ({ d, color }: { d: string; color: string }) => (
  <Icon box="0 0 6 6" className="size-1.5 shrink-0">
    <path d={d} fill={color} />
  </Icon>
);

const SheetFrame = () => (
  <section className="mt-2.5 mb-2 flex min-h-0 flex-1 flex-col border border-[#adadad] bg-white">
    <div className="flex min-h-0 flex-1">
      <Sheet />
      <div className="flex w-3 shrink-0 flex-col items-center pt-2 pr-0.5 pb-2">
        <Triangle d="M0 5h6L3 1z" color="#b5b5b5" />
        <div className="mt-2 mb-2.5 flex w-2 flex-1 flex-col rounded-full bg-[#d6d6d6]">
          <div className="h-[87%] rounded-full bg-[#999]" />
        </div>
        <Triangle d="M0 1h6L3 5z" color="#464646" />
      </div>
    </div>
    <div className="flex h-[15px] shrink-0 items-center pr-[22px] pb-0.5 pl-2">
      <Triangle d="M5 0v6L1 3z" color="#b5b5b5" />
      <div className="mr-2.5 ml-2.5 flex h-2 flex-1 rounded-full bg-[#d6d6d6]">
        <div className="w-[91%] rounded-full bg-[#999]" />
      </div>
      <Triangle d="M1 0v6l4-3z" color="#464646" />
    </div>
  </section>
);

export default function App() {
  return (
    <div className="flex h-screen flex-col overflow-hidden bg-white font-['Liberation_Sans',Arial,sans-serif]">
      <TitleBar />
      <TabBar />
      <div className="flex min-h-0 flex-1">
        <Sidebar />
        <main className="flex min-w-0 flex-1 flex-col pr-[15px] pl-3">
          <FormHeader />
          <SheetFrame />
        </main>
      </div>
    </div>
  );
}
